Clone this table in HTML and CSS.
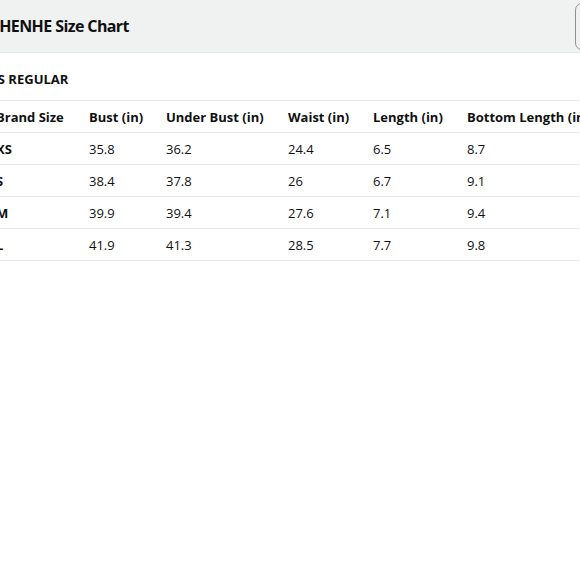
FILE: index.html
```html
<!DOCTYPE html>
<html lang="en">
<head>
<meta charset="utf-8">
<title>SHENHE Size Chart</title>
<link rel="stylesheet" href="styles.css">
</head>
<body>
<div class="modal">
  <header class="modal-header">
    <h1 class="title">SHENHE Size Chart</h1>
    <button class="close" aria-label="Close"></button>
  </header>
  <section class="modal-body">
    <h2 class="section-title">US REGULAR</h2>
    <table class="chart">
      <colgroup>
        <col class="c1"><col class="c2"><col class="c3"><col class="c4"><col class="c5"><col class="c6">
      </colgroup>
      <thead>
        <tr><th>Brand Size</th><th>Bust (in)</th><th>Under Bust (in)</th><th>Waist (in)</th><th>Length (in)</th><th>Bottom Length (in)</th></tr>
      </thead>
      <tbody>
        <tr><th>XS</th><td>35.8</td><td>36.2</td><td>24.4</td><td>6.5</td><td>8.7</td></tr>
        <tr><th>S</th><td>38.4</td><td>37.8</td><td>26</td><td>6.7</td><td>9.1</td></tr>
        <tr><th>M</th><td>39.9</td><td>39.4</td><td>27.6</td><td>7.1</td><td>9.4</td></tr>
        <tr><th>L</th><td>41.9</td><td>41.3</td><td>28.5</td><td>7.7</td><td>9.8</td></tr>
      </tbody>
    </table>
  </section>
</div>
</body>
</html>
```

FILE: styles.css
```css
html, body {
  margin: 0;
  padding: 0;
  overflow: hidden;
  background: #ffffff;
}

body {
  font-family: "Open Sans", "Liberation Sans", sans-serif;
  color: #0f1111;
  width: 580px;
  height: 580px;
}

.modal {
  margin-left: -30px;
  width: 660px;
}

.modal-header {
  display: flex;
  align-items: center;
  height: 53px;
  background: #f0f2f2;
  border-bottom: 1px solid #e3e6e6;
  padding-left: 21px;
  padding-right: 8px;
  box-sizing: border-box;
}

.title {
  margin: 0;
  font-size: 16px;
  letter-spacing: -0.6px;
  font-weight: 700;
  line-height: 20px;
}

.close {
  margin-left: auto;
  width: 47px;
  height: 47px;
  border: 1px solid #8d9096;
  border-radius: 7px;
  background: #f0f2f2;
  padding: 0;
}

.modal-body {
  padding-left: 18px;
}

.section-title {
  margin: 0;
  padding-top: 17px;
  height: 30px;
  font-size: 13px;
  font-weight: 700;
  line-height: 18px;
}

.chart {
  border-collapse: collapse;
  table-layout: fixed;
  width: 700px;
  border-top: 1px solid #e7e9e9;
  font-size: 13px;
}

.c1 { width: 93px; }
.c2 { width: 77px; }
.c3 { width: 122px; }
.c4 { width: 85px; }
.c5 { width: 94px; }
.c6 { width: 229px; }

.chart th,
.chart td {
  text-align: left;
  height: 31px;
  padding: 0 0 0 8px;
  border-bottom: 1px solid #e7e9e9;
  vertical-align: middle;
  white-space: nowrap;
}

.chart th {
  font-weight: 700;
}

.chart td {
  font-weight: 400;
}
```
